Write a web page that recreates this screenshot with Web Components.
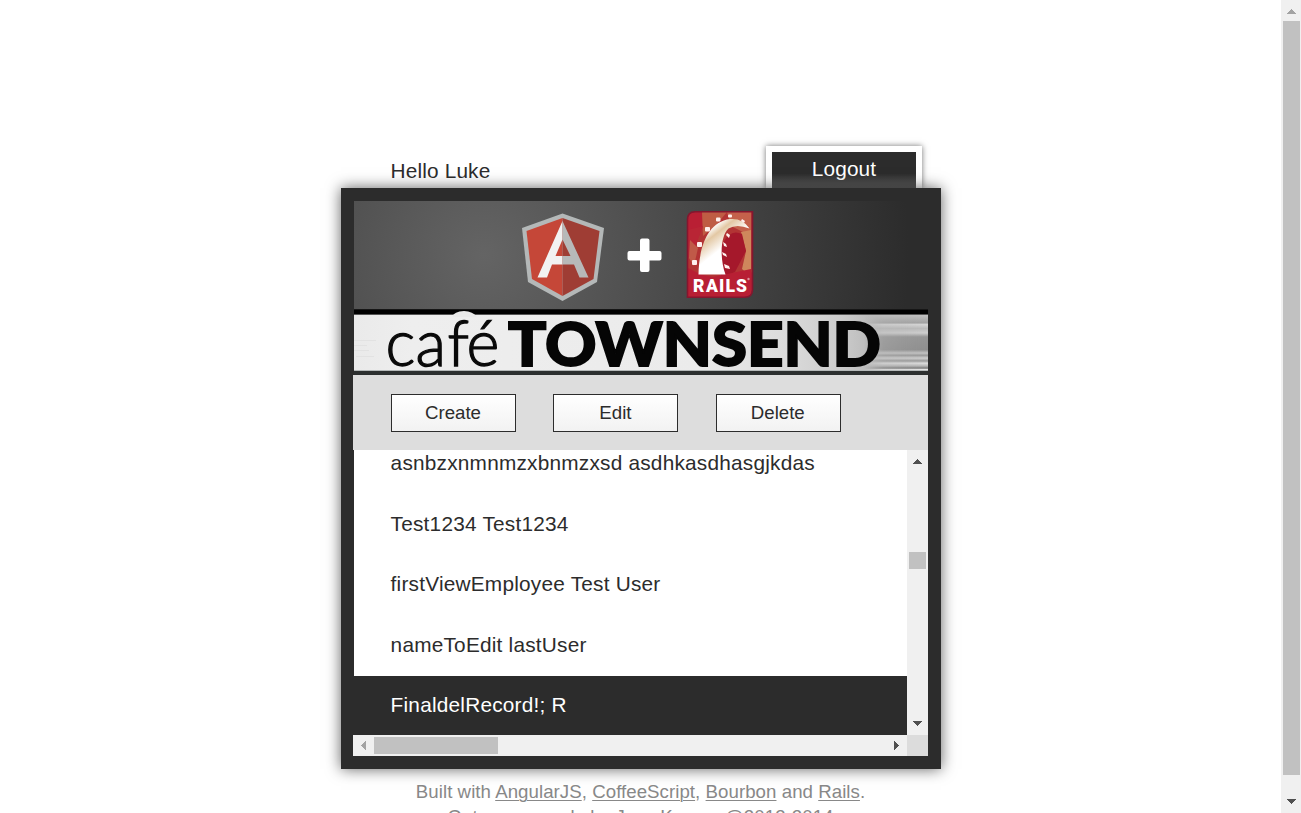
<!DOCTYPE html>
<html lang="en"><head><meta charset="utf-8"><title>Café Townsend</title>
<style>
html,body{margin:0;height:100%;overflow:hidden;background:#fff}
body{font-family:"Liberation Sans",Arial,sans-serif;color:#2c2c2c}
</style></head><body>
<cafe-app></cafe-app>
<script>
const define=(name,html)=>customElements.define(name,class extends HTMLElement{
  constructor(){super();const t=document.createElement('template');t.innerHTML=html;
    this.attachShadow({mode:'open'}).append(t.content.cloneNode(true));}
});

define('cafe-scrollbar',`<style>
:host{display:flex;flex-direction:column;align-items:flex-start;width:21px;background:#f0f0f0;flex:none}
:host([horizontal]){flex-direction:row;width:auto;height:21px}
.b{width:21px;height:21px;flex:none;display:block}
.gap{flex:none;height:var(--offset,0px)}
:host([horizontal]) .gap{height:0}
.thumb{flex:none;width:17px;height:var(--size);background:#c1c1c1;margin-left:2px}
:host([horizontal]) .thumb{width:var(--size);height:17px;margin:2px 0 0}
.rest{flex:1}
.v{display:block}.h{display:none}
:host([horizontal]) .v{display:none}:host([horizontal]) .h{display:block}
.start{fill:var(--start,#505050)}.end{fill:#505050}
</style>
<svg class="b v start" shape-rendering="crispEdges"><path d="M6 14h9v-1h-1v-1h-1v-1h-1v-1h-1v-1h-1v1h-1v1h-1v1h-1v1h-1z"/></svg>
<svg class="b h start" shape-rendering="crispEdges"><path d="M13 6v9h-1v-1h-1v-1h-1v-1h-1v-1h-1v-1h1v-1h1v-1h1v-1h1v-1z"/></svg>
<div class="gap"></div><div class="thumb"></div><div class="rest"></div>
<svg class="b v end" shape-rendering="crispEdges"><path d="M6 7h9v1h-1v1h-1v1h-1v1h-1v1h-1v-1h-1v-1h-1v-1h-1v-1h-1z"/></svg>
<svg class="b h end" shape-rendering="crispEdges"><path d="M8 6v9h1v-1h1v-1h1v-1h1v-1h1v-1h-1v-1h-1v-1h-1v-1h-1v-1z"/></svg>`);

define('cafe-button',`<style>
:host{display:block;box-sizing:border-box;width:125px;height:38px;border:1px solid #2c2c2c;background:linear-gradient(#fff,#f2f2f2);font-size:18.67px;line-height:36px;text-align:center;text-indent:-1px}
</style><slot></slot>`);

define('cafe-logout',`<style>
:host{display:block;box-sizing:border-box;width:156px;height:42px;border:6px solid #fff;border-bottom:0;background:linear-gradient(#2c2c2c 60%,#636363) padding-box;box-shadow:0 0 6px rgba(0,0,0,.55);color:#fff;font-size:20.8px;letter-spacing:.15px;line-height:34px;text-align:center}
</style><slot></slot>`);

define('cafe-row',`<style>
:host{display:block;height:60.4px;flex:none;box-sizing:border-box;padding-left:36.6px;font-size:20.8px;letter-spacing:.22px;line-height:58px;white-space:nowrap}
:host([selected]){background:#2c2c2c;color:#fff}
</style><slot></slot>`);

define('cafe-banner',`<style>:host{display:block;height:174px}svg{display:block;overflow:visible}</style>
<svg width="575" height="174" viewBox="353 201 575 174">
<defs>
<radialGradient id="bg" gradientUnits="userSpaceOnUse" cx="484" cy="255" r="425"><stop offset="0" stop-color="#646464"/><stop offset="1" stop-color="#2c2c2c"/></radialGradient>
<linearGradient id="strip"><stop offset="0" stop-color="#eaeaea"/><stop offset=".1" stop-color="#eee"/><stop offset=".6" stop-color="#ebebeb"/><stop offset=".74" stop-color="#ddd"/><stop offset=".85" stop-color="#cbcbcb"/><stop offset=".92" stop-color="#b4b4b4"/><stop offset="1" stop-color="#a5a5a5"/></linearGradient>
<linearGradient id="streak" x2="0" y2="1"><stop offset="0" stop-color="#c2c2c2"/><stop offset=".14" stop-color="#a2a2a2"/><stop offset=".17" stop-color="#d6d6d6"/><stop offset=".24" stop-color="#bbb"/><stop offset=".32" stop-color="#cfcfcf"/><stop offset=".39" stop-color="#959595"/><stop offset=".62" stop-color="#8e8e8e"/><stop offset=".68" stop-color="#c4c4c4"/><stop offset=".72" stop-color="#999"/><stop offset=".77" stop-color="#d0d0d0"/><stop offset=".82" stop-color="#989898"/><stop offset=".86" stop-color="#dedede"/><stop offset=".91" stop-color="#b6b6b6"/><stop offset=".95" stop-color="#777"/><stop offset=".97" stop-color="#e5e5e5"/></linearGradient>
<linearGradient id="fade"><stop offset="0" stop-color="#000"/><stop offset=".3" stop-color="#aaa"/><stop offset="1" stop-color="#fff"/></linearGradient>
<mask id="m"><rect x="864" y="315" width="64" height="57" fill="url(#fade)"/></mask>
<linearGradient id="band" gradientUnits="userSpaceOnUse" x1="708" y1="230" x2="722" y2="248"><stop offset="0" stop-color="#fff"/><stop offset=".35" stop-color="#e3c8a4"/><stop offset="1" stop-color="#fff"/></linearGradient>
<clipPath id="rc"><path d="M695 212h57v78q0 7-8 7h-56v-77q0-8 7-8z"/></clipPath>
</defs>
<rect x="353" y="201" width="1" height="174" fill="#2c2c2c"/>
<rect x="354" y="201" width="574" height="108" fill="url(#bg)"/>
<rect x="354" y="309.500" width="574" height="5.500" fill="#000"/>
<rect x="354" y="315" width="574" height="56" fill="url(#strip)"/>
<rect x="354" y="314" width="574" height="1" fill="#555"/>
<g stroke="#e2e2e2"><path d="M354 340.500h22M354 345.500h13M354 350.500h15M356 356.500h18"/></g>
<rect x="864" y="315" width="64" height="56" fill="url(#streak)" mask="url(#m)"/>
<rect x="354" y="370" width="574" height="1" fill="#b5b9b9"/>
<rect x="354" y="371" width="574" height="4" fill="#2c2f2f"/>
<path d="M452 317q2-5.500 12-6 9 .5 13 6z" fill="#e9e9e9"/>
<text x="385.500 415.500 447.500 466.500" y="366" font-family="Lato" font-weight="300" font-size="63" fill="#0a0a0a" stroke="#0a0a0a" stroke-width="1.300">café</text>
<text x="508" y="365.500" font-family="Lato" font-weight="900" font-size="60" textLength="373" lengthAdjust="spacingAndGlyphs" fill="#050505" stroke="#050505" stroke-width="1.800">TOWNSEND</text>
<path d="M562.500 213.500L604 228l-7 54-34.500 19-34.500-19-6-54z" fill="#b4b8b8"/>
<path d="M562.500 218L526.500 231l5.500 48 30.500 17z" fill="#c54738"/>
<path d="M562.500 218L599.500 231l-6 48-31 17z" fill="#9f3d34"/>
<path d="M562.500 221L537.500 277.500h9.500l5-13h10.500v-8.500h-7l7-16.500z" fill="#f2f2f2"/>
<path d="M562.500 221L588.500 277.500h-9l-5.500-13h-11.500v-8.500h8l-8-16.500z" fill="#b7b9b9"/>
<path d="M642 238.500h5.500q2 0 2 2V251h10q2 0 2 2v5.500q0 2-2 2h-10v9.500q0 2-2 2H642q-2 0-2-2v-9.500h-10.500q-2 0-2-2V253q0-2 2-2H640v-10.500q0-2 2-2z" fill="#fff"/>
<g clip-path="url(#rc)"><rect x="687" y="211" width="66" height="88" fill="#b91f34"/>
<path d="M702 212h50v60l-14 10-50-10v-34l15-10z" fill="#b23434"/>
<path d="M702 212h25l-10 12-14 12z" fill="#bf5c44"/><path d="M727 212h24v24l-20-10z" fill="#c4614b"/>
<path d="M688 230l15-4-8 22-7 10z" fill="#b92535"/>
<path d="M690 240l8 8-4 18-5-8z" fill="#c05a48"/>
<path d="M741 232l10-2v47l-9-8 4-18z" fill="#cf875c"/>
<path d="M722 245q8-17 20-11l4 17-11 21-13 6q-7-17 0-33z" fill="#a5182b"/>
<path d="M688 268l20 10 43-9v30h-63z" fill="#b81f34"/>
</g>
<path d="M695 211.700h57.500v78q0 7.500-8 7.500h-57v-77.500q0-8 7.500-8z" fill="none" stroke="#85162e" stroke-width="1.600"/>
<path d="M698.500 274.500C699 248 707 222 730 219q13-1 19.500 9.500-13-5-21 0c-8 7-9 30-3 46z" fill="url(#band)"/>
<g fill="#fff0ee"><rect x="716" y="217.500" width="4.500" height="4" rx="1"/><rect x="705" y="227" width="5" height="4.500" rx="1"/><rect x="697" y="242" width="5" height="5" rx="1"/><rect x="692" y="260" width="5" height="5" rx="1"/><rect x="728" y="214.500" width="4" height="3" rx="1"/><path d="M727 233l3 2-1 3-3-3zM723 242l3 2 1 3-3-1zM722 252l4 2 1 3-4-2zM724 264l5 2 1 3-5-1zM742 219l3 2-1 2-3-2z"/></g>
<text x="693 706 719 725.500 736" y="292.300" font-family="Roboto" font-size="17.500" font-weight="900" fill="#fff">RAILS</text>
<circle cx="748.500" cy="279" r="1.200" fill="#d9929a"/>
</svg>`);

define('cafe-panel',`<style>
:host{display:block;position:relative;box-sizing:border-box;width:600px;height:581px;background:#2c2c2c;padding:13px 13px 13px 12px;box-shadow:0 0 14px rgba(0,0,0,.62)}
.tools{display:flex;gap:37.400px;height:75px;box-sizing:border-box;background:#ddd;padding:19px 0 0 38px}
.list{display:flex;height:285px}
.rows{flex:1;margin-left:1px;background:#fff;overflow:hidden;display:flex;flex-direction:column;justify-content:flex-end}
.last{margin-bottom:-1.400px}
.bottom{display:flex}.bottom>cafe-scrollbar{flex:1}.corner{width:21px;background:#dcdcdc}
</style>
<cafe-banner></cafe-banner>
<div class="tools"><cafe-button>Create</cafe-button><cafe-button>Edit</cafe-button><cafe-button>Delete</cafe-button></div>
<div class="list"><div class="rows">
<cafe-row>asnbzxnmnmzxbnmzxsd asdhkasdhasgjkdas</cafe-row><cafe-row>Test1234 Test1234</cafe-row><cafe-row>firstViewEmployee Test User</cafe-row><cafe-row>nameToEdit lastUser</cafe-row><cafe-row class="last" selected>FinaldelRecord!; R</cafe-row>
</div><cafe-scrollbar style="--offset:81px;--size:17px"></cafe-scrollbar></div>
<div class="bottom"><cafe-scrollbar horizontal style="--size:124px;--start:#a3a3a3"></cafe-scrollbar><div class="corner"></div></div>`);

define('cafe-footer',`<style>
:host{display:block;padding-top:10px;text-align:center;color:#888;font-size:18.67px;letter-spacing:.05px;line-height:25px;white-space:nowrap}
a{text-decoration:underline;text-decoration-thickness:1px;text-underline-offset:2px}
div{margin-left:-1px}
</style><div>Built with <a>AngularJS</a>, <a>CoffeeScript</a>, <a>Bourbon</a> and <a>Rails</a>.</div><div>Get source code by Jens Krause @2013-2014</div>`);

define('cafe-app',`<style>
:host{display:flex;height:813px;overflow:hidden}
main{flex:1;display:flex;flex-direction:column;align-items:center;padding-top:146px}
.content{width:600px;margin-left:1px}
.top{display:flex;justify-content:space-between;height:42px;padding:0 19px 0 49.600px;font-size:20.8px;letter-spacing:.15px;line-height:49px}
.page{width:20px}
</style><main><div class="content"><div class="top"><span>Hello Luke</span><cafe-logout>Logout</cafe-logout></div><cafe-panel></cafe-panel><cafe-footer></cafe-footer></div></main>
<cafe-scrollbar class="page" style="--size:754px;--start:#a3a3a3"></cafe-scrollbar>`);
</script></body></html>
